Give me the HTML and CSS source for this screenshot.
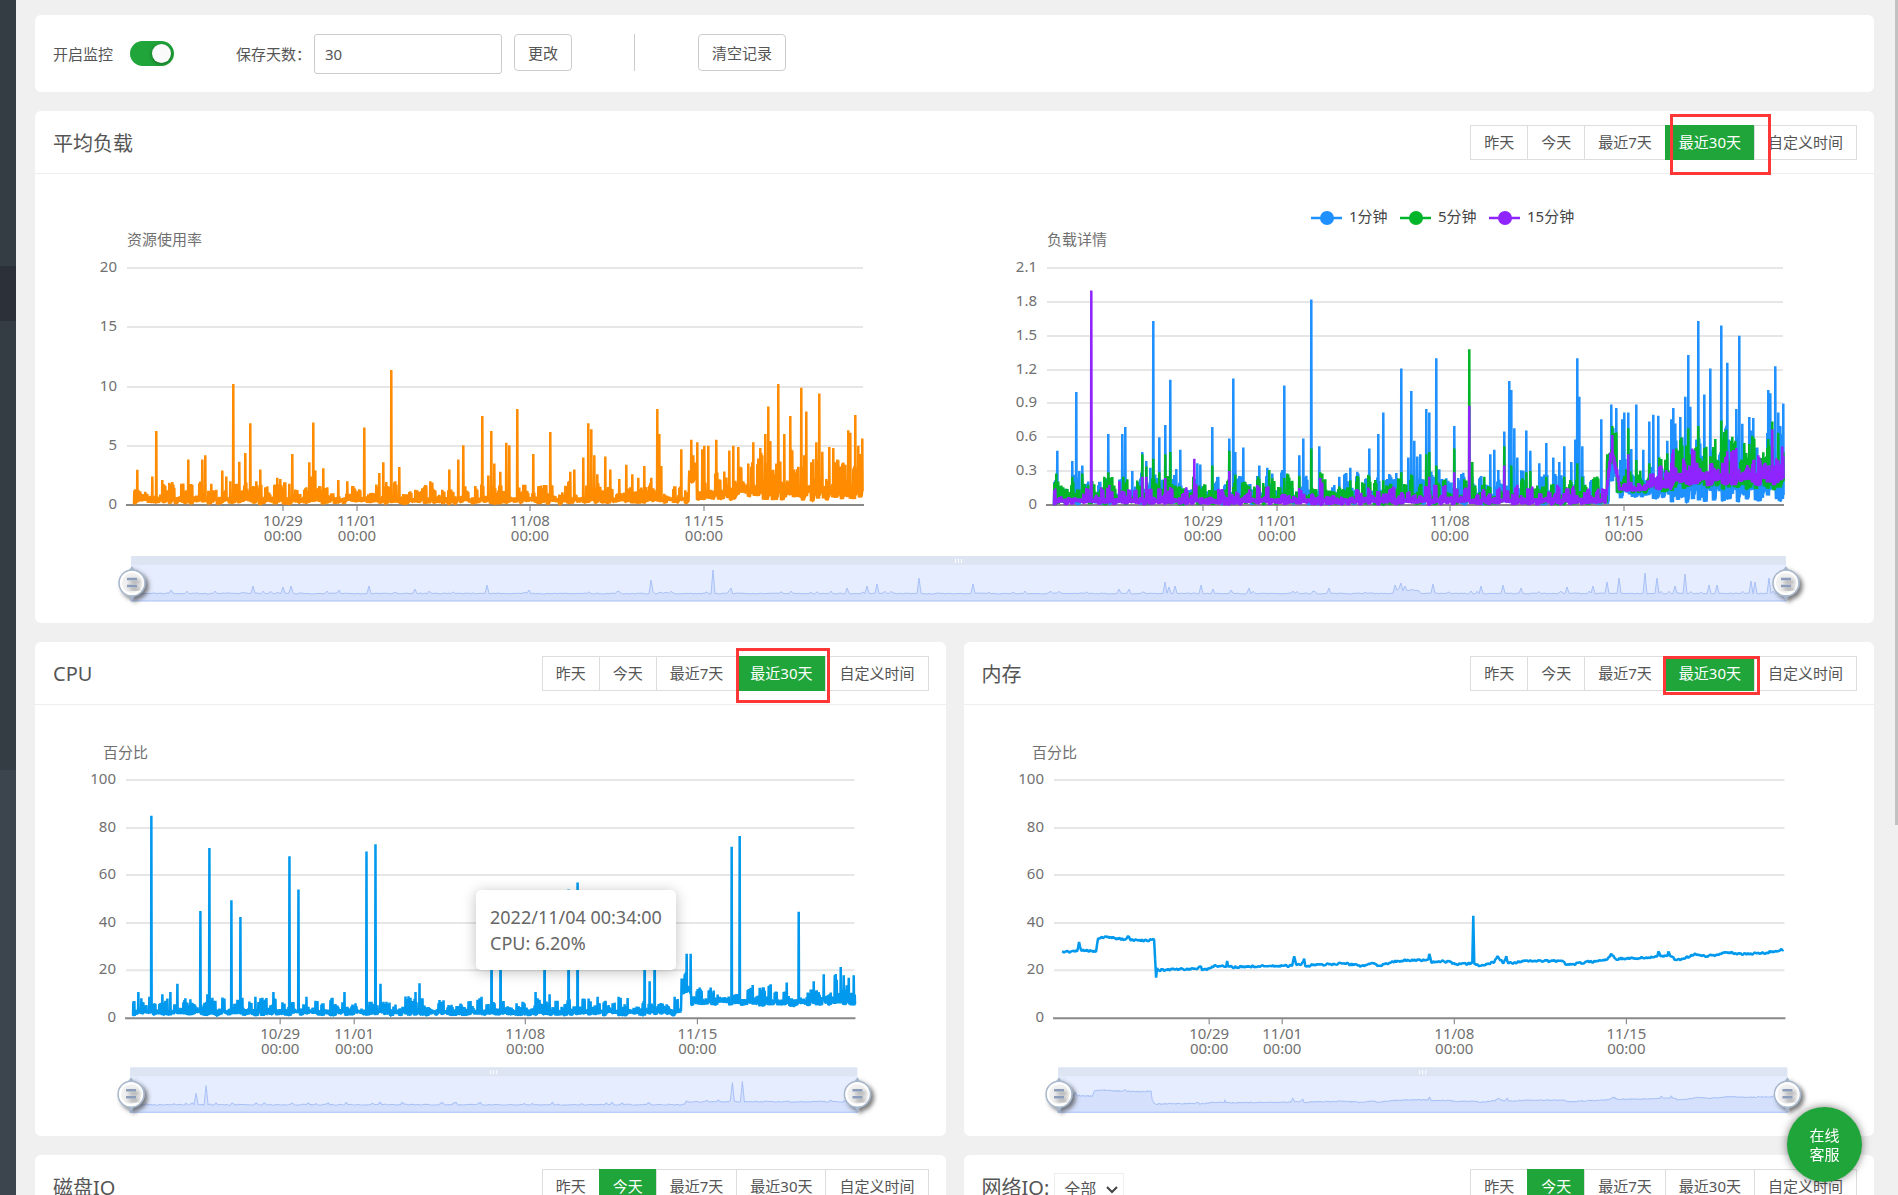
FILE: index.html
```
<!DOCTYPE html>
<html lang="zh-CN">
<head>
    <meta charset="UTF-8">
    <meta name="viewport" content="width=device-width, initial-scale=1.0">
    <title>监控</title>
    <link rel="stylesheet" href="styles.css">
</head>
<body>

    <aside class="sidebar">
        <div class="menu-top"></div>
        <div class="menu-active"></div>
        <div class="menu-rest"></div>
    </aside>

    <main class="main">
        <section class="card settings">
            <label for="monitor">开启监控</label>
            <input type="checkbox" class="switch" id="monitor" checked>
            <label for="days" class="days-label">保存天数：</label>
            <input type="text" class="days" id="days" value="30">
            <button type="button" class="btn">更改</button>
            <span class="divider"></span>
            <button type="button" class="btn">清空记录</button>
        </section>

        <section class="card">
            <header class="card-head">
                <h2>平均负载</h2>
                <div class="tabs">
                    <button type="button">昨天</button>
                    <button type="button">今天</button>
                    <button type="button">最近7天</button>
                    <button type="button" class="on">最近30天</button>
                    <button type="button">自定义时间</button>
                    <span class="mark mark-load"></span>
                </div>
            </header>
            <svg class="chart" id="loadChart" viewBox="0 0 1839 449"></svg>
        </section>

        <div class="row">
            <section class="card">
                <header class="card-head">
                    <h2>CPU</h2>
                    <div class="tabs">
                        <button type="button">昨天</button>
                        <button type="button">今天</button>
                        <button type="button">最近7天</button>
                        <button type="button" class="on">最近30天</button>
                        <button type="button">自定义时间</button>
                        <span class="mark mark-cpu"></span>
                    </div>
                </header>
                <svg class="chart" id="cpuChart" viewBox="0 0 910 431"></svg>
                <div class="tooltip">2022/11/04 00:34:00<br>CPU: 6.20%</div>
            </section>

            <section class="card">
                <header class="card-head">
                    <h2>内存</h2>
                    <div class="tabs">
                        <button type="button">昨天</button>
                        <button type="button">今天</button>
                        <button type="button">最近7天</button>
                        <button type="button" class="on">最近30天</button>
                        <button type="button">自定义时间</button>
                        <span class="mark mark-mem"></span>
                    </div>
                </header>
                <svg class="chart" id="memChart" viewBox="0 0 910 431"></svg>
            </section>
        </div>

        <div class="row">
            <section class="card">
                <header class="card-head">
                    <h2>磁盘IO</h2>
                    <div class="tabs">
                        <button type="button">昨天</button>
                        <button type="button" class="on">今天</button>
                        <button type="button">最近7天</button>
                        <button type="button">最近30天</button>
                        <button type="button">自定义时间</button>
                    </div>
                </header>
            </section>

            <section class="card">
                <header class="card-head">
                    <h2><label for="netcard">网络IO:</label></h2>
                    <span class="select-box">
                        <select id="netcard"><option>全部</option></select>
                        <svg width="12" height="8" viewBox="0 0 12 8"><path d="M1 1l5 5 5-5" fill="none" stroke="#444" stroke-width="2"/></svg>
                    </span>
                    <div class="tabs">
                        <button type="button">昨天</button>
                        <button type="button" class="on">今天</button>
                        <button type="button">最近7天</button>
                        <button type="button">最近30天</button>
                        <button type="button">自定义时间</button>
                    </div>
                </header>
            </section>
        </div>
    </main>

    <div class="scroll-thumb"></div>
    <button type="button" class="service">在线<br>客服</button>

    <script src="charts.js"></script>
</body>
</html>
```

FILE: styles.css
```
* {
    box-sizing: border-box;
}

body {
    display: flex;
    height: 100vh;
    margin: 0;
    overflow: hidden;
    background: #f0f0f0;
    color: #555;
    font-family: "Noto Sans", "Noto Sans CJK SC", sans-serif;
    font-size: 15px;
}

button, input, select {
    font: inherit;
    color: inherit;
}

/* Menu */
.sidebar {
    display: flex;
    flex-direction: column;
    flex: 0 0 16px;
    background: #3c444d;
}

.menu-top {
    height: 266px;
    background: #353d44;
}

.menu-active {
    height: 55px;
    background: #2c3038;
}

.menu-rest {
    height: 449px;
    background: #353d44;
}

.main {
    flex: 1;
    min-width: 0;
    padding: 15px 24px 0 19px;
}

.card {
    position: relative;
    margin-bottom: 19px;
    background: #fff;
    border-radius: 6px;
}

.row {
    display: grid;
    grid-template-columns: 1fr 1fr;
    gap: 18px;
}

/* Settings */
.settings {
    display: flex;
    align-items: center;
    height: 77px;
    padding: 0 18px;
}

.switch {
    appearance: none;
    width: 44px;
    height: 25px;
    margin: 0 62px 0 17px;
    padding: 3px;
    border-radius: 13px;
    background: #20a53a;
}

.switch::before {
    content: "";
    display: block;
    width: 19px;
    height: 19px;
    margin-left: auto;
    border-radius: 50%;
    background: #fafafa;
    box-shadow: 0 1px 4px rgba(0, 0, 0, 0.4);
}

.days {
    width: 188px;
    height: 40px;
    margin: 0 12px 0 3px;
    padding: 0 10px;
    border: 1px solid #ccc;
    border-radius: 3px;
}

.btn {
    height: 37px;
    padding: 0 13px;
    margin-bottom: 3px;
    background: #fff;
    border: 1px solid #ccc;
    border-radius: 4px;
}

.divider {
    width: 1px;
    height: 37px;
    margin: 0 63px 3px 62px;
    background: #ccc;
}

/* Card header */
.card-head {
    display: flex;
    align-items: center;
    height: 63px;
    padding: 0 17px 0 18px;
    border-bottom: 1px solid #eee;
}

.card-head h2 {
    margin: 0;
    font-size: 20px;
    font-weight: 400;
}

.tabs {
    position: relative;
    display: flex;
    margin-left: auto;
}

.tabs button {
    height: 35px;
    margin-left: -1px;
    padding: 0 13px 2px;
    background: #fff;
    border: 1px solid #ddd;
    white-space: nowrap;
}

.tabs .on {
    background: #20a53a;
    border-color: #20a53a;
    color: #fff;
}

.select-box {
    position: relative;
    margin: 8px 0 0 5px;
}

.select-box select {
    appearance: none;
    display: block;
    width: 70px;
    height: 35px;
    padding: 0 9px 2px;
    background: #fff;
    border: 1px solid #eee;
    font-size: 16px;
}

.select-box svg {
    position: absolute;
    right: 6px;
    top: 13px;
}

/* Red highlight boxes */
.mark {
    position: absolute;
    border: 3px solid #ff3737;
}

.mark-load {
    right: 86px;
    top: -11px;
    width: 101px;
    height: 61px;
}

.mark-cpu {
    right: 99px;
    top: -8px;
    width: 94px;
    height: 55px;
}

.mark-mem {
    right: 97px;
    top: 0;
    width: 97px;
    height: 39px;
}

/* Charts */
.chart {
    display: block;
    width: 100%;
    height: auto;
    font-size: 15px;
    fill: #707070;
}

.grid {
    stroke: #e6e6e6;
    stroke-width: 2;
}

.axis {
    stroke: #888;
    stroke-width: 2;
}

.tick {
    stroke: #777;
    stroke-width: 1;
}

.line {
    fill: none;
    stroke-width: 2.5;
    stroke-linejoin: bevel;
}

.zoom-bar { fill: #dde5f3; }
.zoom-body { fill: #e6edfe; }
.zoom-area { fill: #d4e0fc; stroke: #a9c1f7; stroke-width: 1; }
.zoom-dots { stroke: #fff; stroke-width: 1; }

.tooltip {
    position: absolute;
    left: 441px;
    top: 248px;
    width: 200px;
    height: 80px;
    padding: 14px;
    background: #fff;
    border-radius: 5px;
    box-shadow: 0 2px 14px rgba(0, 0, 0, 0.25);
    color: #666;
    font-size: 18px;
    line-height: 26px;
    white-space: nowrap;
}

.scroll-thumb {
    position: fixed;
    right: 0;
    top: 0;
    width: 3px;
    height: 825px;
    background: #c1c1c1;
}

.service {
    position: fixed;
    right: 36px;
    bottom: 13px;
    width: 75px;
    height: 75px;
    padding: 0;
    border: none;
    border-radius: 50%;
    background: #20a53a;
    box-shadow: 0 0 8px rgba(0, 0, 0, 0.5);
    color: #fff;
    line-height: 19px;
}
```

FILE: charts.js
```
// Pics de chaque courbe : [x dans le graphique, valeur]
const usage = [
    [10,2.97],[25,2.4],[29,6.25],[35,2.1],[45,1.95],[61,3.85],[75,3.85],[78,4.2],[84,1.8],[95,2.9],[99,2.4],[103,2],
    [106,10.2],[112,3.65],[118,4.4],[123,6.9],[129,2],[133,3],[150,2.3],[153,2.2],[162,1.8],[165,4.3],[182,3.6],[184,2.4],
    [186,6.95],[188,2.9],[196,3.1],[211,2.1],[220,2],[237,6.55],[252,2.7],[256,3.6],[264,11.4],[272,3.2],[303,2],[322,3],
    [331,3.85],[336,5.05],[355,7.5],[361,2.5],[364,6.25],[367,3.5],[373,2.8],[379,5.25],[382,5.05],[390,8.1],[406,4.3],
    [423,6.15],[443,2.8],[447,3],[456,4],[461,6.9],[464,6.4],[467,4.2],[470,2.6],[478,4.1],[483,3],[492,2.2],[499,3.4],
    [505,2.6],[511,2.3],[517,3.3],[524,2.3],[530,8.1],[532,6],[534,3.3],[554,4.7],[564,5.5],[566,4.2],[570,5.3],[575,4.7],
    [577,5],[581,5],[589,5.5],[602,4.6],[606,5],[611,4.9],[621,3.5],[626,5.3],[633,4.8],[638,6],[641,8.3],[643,5.4],
    [649,3.5],[651,10.2],[657,6],[663,7.5],[667,3],[674,9.9],[677,4.2],[679,7.9],[689,5.3],[692,9.4],[695,4.5],[702,4.9],
    [706,4.8],[718,3.4],[721,6.3],[723,6.1],[728,7.6],[731,5],[733,4.3],[735,5.6]
];
const load1 = [
    [10,.48],[25,.39],[29,1],[32,.3],[35,.35],[61,.63],[75,.63],[78,.69],[85,.3],[95,.47],[99,.39],[103,.33],[106,1.63],
    [112,.6],[118,.71],[123,1.11],[129,.32],[133,.49],[150,.37],[153,.36],[165,.69],[171,.25],[182,.59],[186,1.12],
    [188,.47],[196,.51],[212,.35],[220,.33],[225,.28],[237,1.06],[252,.44],[256,.59],[264,1.82],[272,.52],[292,.25],
    [303,.33],[322,.5],[331,.63],[336,.82],[354,1.21],[361,.42],[364,1.01],[367,.57],[370,.43],[373,.45],[379,.85],
    [382,.82],[389,1.3],[407,.7],[417,.25],[443,.45],[447,.49],[451,.31],[457,.65],[462,1.1],[464,1.02],[467,.68],
    [470,.42],[479,.66],[483,.48],[492,.37],[499,.55],[506,.42],[512,.38],[517,.52],[524,.38],[528,.58],[530,1.3],
    [532,.96],[535,.52],[554,.76],[564,.89],[569,.86],[575,.76],[577,.82],[581,.82],[589,.89],[596,.49],[602,.74],
    [606,.8],[611,.79],[620,.57],[624,.76],[626,.86],[633,.78],[638,.96],[641,1.33],[643,.87],[649,.58],[651,1.63],
    [657,.98],[663,1.21],[674,1.59],[678,.68],[680,1.26],[682,.58],[689,.85],[692,1.5],[695,.72],[702,.78],[704,.66],
    [706,.77],[721,1.02],[723,.99],[728,1.23],[731,.82],[733,.7],[736,.9]
];
const load5 = [
    [9,.28],[25,.25],[35,.28],[61,.29],[76,.25],[95,.45],[99,.34],[106,.41],[112,.29],[118,.45],[123,.47],[146,.25],
    [165,.35],[182,.48],[188,.27],[222,.31],[237,.24],[252,.26],[264,.5],[273,.29],[275,.28],[303,.22],[311,.25],
    [336,.22],[354,.29],[364,.27],[379,.45],[382,.47],[389,.35],[407,.5],[422,1.38],[425,.38],[437,.25],[457,.52],
    [464,.35],[479,.29],[483,.3],[499,.25],[517,.25],[530,.37],[535,.25],[565,.7],[581,.68],[589,.4],[602,.37],[629,.5],
    [641,.68],[651,.7],[657,.5],[674,.75],[679,.67],[688,.57],[697,.55],[702,.54],[725,.74],[731,.64],[736,.47]
];
const load15 = [
    [44,1.9],[72,.21],[95,.25],[99,.25],[118,.24],[147,.41],[182,.3],[273,.24],[275,.2],[382,.25],[407,.29],[422,.88],
    [457,.35],[565,.62],[581,.45],[725,.67]
];
const cpu = [
    [12,11],[23,9],[25,85],[36,10],[44,11],[51,14.4],[64,8],[74,45],[81,10],[83,71.5],[105,49.5],[114,42.5],[129,9],
    [147,11],[163,68],[172,54],[180,9],[218,11],[240,70],[249,73],[254,14.5],[289,11],[293,14.7],[355,9],[365,35],
    [374,35],[409,11],[418,40],[423,10],[442,54],[451,57],[471,9],[501,8.5],[518,40],[523,15.5],[528,40],[548,9],
    [560,27],[564,27],[605,72],[613,76.5],[660,15],[672,44.7],[687,15.5],[697,18.5],[714,21.5],[717,18],[722,17],[727,18]
];
const mem = [
    [8,28],[23,28],[25,32],[27,28.5],[42,28],[44,33.5],[47,34],[56,34],[71,33],[74,34.5],[76,33],[85,32.5],[100,33],
    [102,17],[103,21],[105,20],[120,20.5],[141,20.7],[147,21.5],[148,20],[162,22],[172,21.5],[173,24],[174,21.5],
    [238,22],[240,26],[242,22.5],[247,22.5],[250,25],[251,22],[289,23],[307,22],[319,23],[326,22],[343,24],[374,24.5],
    [375,27],[377,23.5],[395,24],[401,22.5],[418,23],[419,43],[420,23],[426,22],[440,23.5],[443,26],[449,23],[452,26],
    [454,23],[470,24],[507,24],[513,22.5],[552,24.5],[557,27],[561,25],[591,25.3],[603,26],[604,28],[606,26],[613,26],
    [614,28],[616,26],[621,24.5],[630,25],[640,27],[652,26],[673,27.5],[694,27],[712,27.5],[729,28.8]
];
// Aperçu sous le graphique de charge : [x, hauteur]
const loadZoom = [
    [41,4],[122,8],[153,7],[161,8],[208,4],[238,8],[285,5],[357,9],[399,4],[521,14],[582,24],[601,6],[717,6],[736,8],
    [747,10],[788,16],[843,10],[989,5],[998,5],[1035,12],[1039,7],[1044,8],[1071,9],[1082,5],[1100,4],[1118,6],[1198,6],
    [1265,6],[1270,8],[1275,5],[1303,10],[1351,8],[1372,9],[1391,6],[1436,7],[1463,8],[1477,12],[1489,16],[1515,21],
    [1527,16],[1544,8],[1555,20],[1579,9],[1587,9],[1621,13],[1625,12],[1638,16]
];

let seed = 7;
function rand() {
    seed = (seed * 16807) % 2147483647;
    return seed / 2147483647;
}

// Bruit de fond entre min et max, avec les pics par-dessus
function noisy(peaks, end, band) {
    const pts = [];
    let high = 1;
    let low = 0;
    for (let x = 7; x <= end; x++) {
        const [min, max] = band(x);
        const size = max - min;
        if (x % 3 === 0) {
            high = 0.4 + Math.pow(rand(), 2) * 0.9;
            low = rand() * 0.22;
        }
        const peak = peaks.find(p => p[0] === x);
        pts.push([x, min + size * low]);
        pts.push([x + 0.3, peak ? peak[1] : min + size * high * (0.75 + rand() * 0.25)]);
        pts.push([x + 0.6, min + size * (low + rand() * 0.1)]);
    }
    return pts;
}

function path(pts, left, bottom, scale) {
    return "M" + pts.map(p => (left + p[0]).toFixed(1) + " " + (bottom - p[1] * scale).toFixed(1)).join("L");
}

function axes(o) {
    let s = `<text x="${o.titleX}" y="${o.titleY}">${o.title}</text>`;
    const n = o.labels.length - 1;
    o.labels.forEach((label, i) => {
        const y = Math.round(o.top + (o.bottom - o.top) * i / n);
        if (i < n) s += `<line class="grid" x1="${o.left}" x2="${o.left + o.width}" y1="${y}" y2="${y}"/>`;
        s += `<text x="${o.left - 10}" y="${y + 4}" text-anchor="end">${label}</text>`;
    });
    ["10/29", "11/01", "11/08", "11/15"].forEach((day, i) => {
        const x = o.left + o.ticks[i];
        s += `<line class="tick" x1="${x}" x2="${x}" y1="${o.bottom}" y2="${o.bottom + 6}"/>
              <text x="${x}" y="${o.bottom + 21}" text-anchor="middle">${day}</text>
              <text x="${x}" y="${o.bottom + 36}" text-anchor="middle">00:00</text>`;
    });
    return s;
}

function axisLine(o) {
    return `<line class="axis" x1="${o.left - 1}" x2="${o.left + o.width + 1}" y1="${o.bottom}" y2="${o.bottom}"/>`;
}

function line(pts, o, color) {
    return `<path class="line" stroke="${color}" d="${path(pts, o.left, o.bottom, (o.bottom - o.top) / o.max)}"/>`;
}

function handle(x, y) {
    return `<g filter="url(#shadow)"><path d="M${x} ${y - 17}l3 4h-6zM${x} ${y + 17}l3-4h-6z" fill="#a7b7cc"/>
        <circle cx="${x}" cy="${y}" r="13" fill="#f0f0f0" stroke="#a7b7cc" stroke-width="1.5"/>
        <circle cx="${x}" cy="${y}" r="11" fill="none" stroke="#fff" stroke-width="2"/></g>
        <g filter="url(#shadow)"><path d="M${x - 5} ${y - 4}h10M${x - 5} ${y + 3}h10" stroke="#8b9dbb" stroke-width="2.5"/></g>`;
}

function zoomBar(x, y, width, pts) {
    const mid = x + width / 2;
    return `<rect class="zoom-bar" x="${x}" y="${y}" width="${width}" height="10" rx="1"/>
        <rect class="zoom-body" x="${x}" y="${y + 9}" width="${width}" height="36"/>
        <path class="zoom-area" d="${path(pts, x, y + 45, 1)}L${x + width} ${y + 45}L${x} ${y + 45}Z"/>
        <path class="zoom-dots" d="M${mid - 3} ${y + 3}v4M${mid} ${y + 3}v4M${mid + 3} ${y + 3}v4"/>
        ${handle(x + 1, y + 27)}${handle(x + width, y + 27)}`;
}

function zoomPoints(width, peaks, base) {
    const pts = [];
    for (let x = 0; x <= width; x += 2) {
        const peak = peaks.find(p => p[0] === x || p[0] === x + 1);
        const b = base(x);
        pts.push([x, b + (peak ? peak[1] : rand() < 0.15 ? rand() * 3 : rand())]);
    }
    return pts;
}

const defs = `<defs><filter id="shadow" x="-50%" y="-50%" width="220%" height="220%">
    <feDropShadow dx="3" dy="3" stdDeviation="2" flood-color="#444" flood-opacity=".7"/></filter></defs>`;

// Charge moyenne
const left = { left: 92, width: 736, top: 94, bottom: 331, max: 20, labels: [20, 15, 10, 5, 0],
    title: "资源使用率", titleX: 92, titleY: 71, ticks: [156, 230, 403, 577] };
const right = { left: 1012, width: 736, top: 94, bottom: 331, max: 2.1, labels: [2.1, 1.8, 1.5, 1.2, 0.9, 0.6, 0.3, 0],
    title: "负载详情", titleX: 1012, titleY: 71, ticks: [156, 230, 403, 577] };

let html = defs + axes(left) + axes(right) + axisLine(left) + axisLine(right);
html += line(noisy(usage, 735, x => x < 562 ? [0.05, 1.6] : x < 570 ? [1.8, 4.2] : x < 610 ? [0.4, 2.4] : [0.3, 3.8]), left, "#ff8c00");
html += line(noisy(load1, 736, x => x < 562 ? [0, 0.25] : x < 570 ? [0.2, 0.7] : x < 620 ? [0.05, 0.4] : [0.02, 0.58]), right, "#1e90ff");
html += line(noisy(load5, 736, x => x < 560 ? [0, 0.22] : x < 570 ? [0.35, 0.62] : x < 600 ? [0.1, 0.28] : x < 630 ? [0.1, 0.4] : [0.13, 0.54]), right, "#00b52a");
html += line(noisy(load15, 736, x => {
    if (x < 558) return [0, 0.15];
    if (x < 565) return [(x - 558) * 0.07, (x - 556) * 0.07];
    if (x < 572) return [0.15 + (572 - x) * 0.04, 0.25 + (572 - x) * 0.05];
    return x < 600 ? [0.11, 0.24] : x < 625 ? [0.13, 0.34] : [0.17, 0.46];
}), right, "#9024ff");

[["1分钟", "#1e90ff"], ["5分钟", "#00b52a"], ["15分钟", "#9024ff"]].forEach(([name, color], i) => {
    const x = 1276 + i * 89;
    html += `<path class="line" stroke="${color}" d="M${x} 44h31"/><circle cx="${x + 16}" cy="44" r="7" fill="${color}"/>
        <text x="${x + 38}" y="48" fill="#444">${name}</text>`;
});
html += zoomBar(96, 382, 1655, zoomPoints(1655, loadZoom, x => x > 1262 && x < 1290 ? 10 : 7));
document.getElementById("loadChart").innerHTML = html;

// CPU
const c = { left: 91, width: 728, top: 75, bottom: 313, max: 100, labels: [100, 80, 60, 40, 20, 0],
    title: "百分比", titleX: 68, titleY: 53, ticks: [154, 228, 399, 571] };
document.getElementById("cpuChart").innerHTML = axes(c) + axisLine(c)
    + line(noisy(cpu, 728, x => x < 555 ? [1, 7.5] : x < 565 ? [10, 18] : x < 680 ? [5, 12.5] : [5, 16]), c, "#0099ee")
    + zoomBar(95, 362, 727, zoomPoints(727, [[67,12],[76,20],[602,20],[612,21]], x => x < 555 ? 7 : 10));

// Mémoire
const m = { left: 90, width: 730, top: 75, bottom: 313, max: 100, labels: [100, 80, 60, 40, 20, 0],
    title: "百分比", titleX: 68, titleY: 53, ticks: [155, 228, 400, 572] };
const memPts = [];
mem.forEach((p, i) => {
    memPts.push(p);
    const next = mem[i + 1];
    if (!next) return;
    for (let x = p[0] + 1; x < next[0]; x++) {
        memPts.push([x, p[1] + (next[1] - p[1]) * (x - p[0]) / (next[0] - p[0]) + rand() - 0.5]);
    }
});
const memZoom = memPts.filter(p => p[1] < 40 && p[1] > 19).map(p => [(p[0] - 8) * 729 / 721, p[1] - 12]);
document.getElementById("memChart").innerHTML = axes(m) + axisLine(m)
    + line(memPts, m, "#0099ee")
    + zoomBar(94, 362, 729, memZoom);
```
